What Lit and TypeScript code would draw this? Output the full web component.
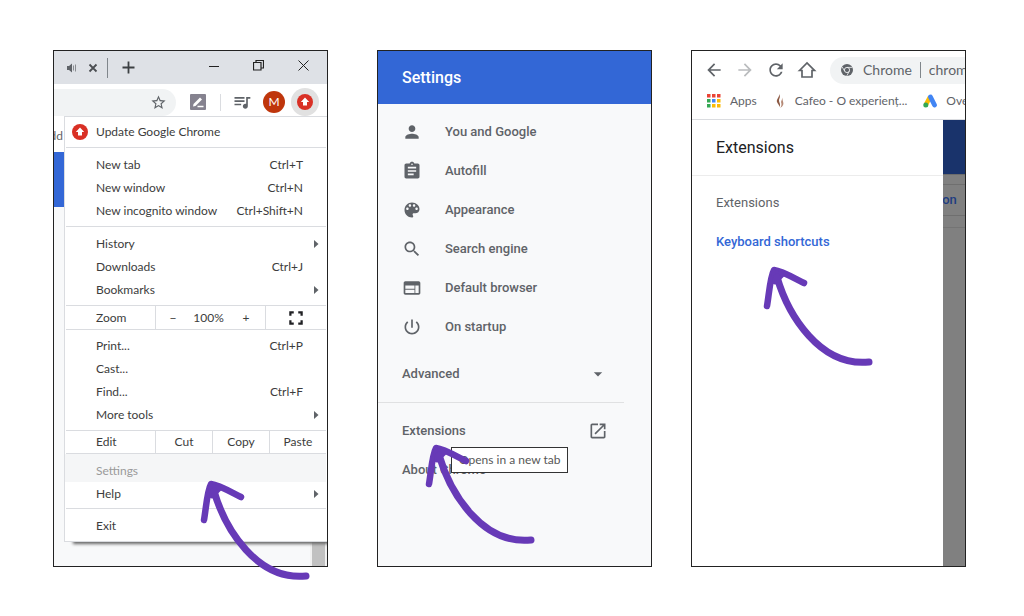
import { LitElement, html, css, svg } from "lit";
import { customElement } from "lit/decorators.js";

const ICONS: Record<string, string> = {
  person: "M12 12c2.21 0 4-1.79 4-4s-1.79-4-4-4-4 1.79-4 4 1.79 4 4 4zm0 2c-2.67 0-8 1.34-8 4v2h16v-2c0-2.66-5.33-4-8-4z",
  assignment: "M19 3h-4.18C14.4 1.84 13.3 1 12 1s-2.400.84-2.820 2H5c-1.100 0-2 .9-2 2v14c0 1.100.9 2 2 2h14c1.100 0 2-.9 2-2V5c0-1.100-.9-2-2-2zm-7 0c.55 0 1 .45 1 1s-.45 1-1 1-1-.45-1-1 .45-1 1-1zm2 14H7v-2h7v2zm3-4H7v-2h10v2zm0-4H7V7h10v2z",
  palette: "M12 3c-4.970 0-9 4.030-9 9s4.030 9 9 9c.83 0 1.500-.67 1.500-1.500 0-.39-.15-.74-.39-1.010-.23-.26-.38-.61-.38-.99 0-.83.67-1.500 1.500-1.500H16c2.760 0 5-2.240 5-5 0-4.420-4.030-8-9-8zm-5.500 9c-.83 0-1.500-.67-1.500-1.500S5.670 9 6.500 9 8 9.670 8 10.500 7.330 12 6.500 12zm3-4C8.670 8 8 7.330 8 6.500S8.670 5 9.500 5s1.500.67 1.500 1.500S10.330 8 9.500 8zm5 0c-.83 0-1.500-.67-1.500-1.500S13.670 5 14.500 5s1.500.67 1.500 1.500S15.330 8 14.500 8zm3 4c-.83 0-1.500-.67-1.500-1.500S16.670 9 17.500 9s1.500.67 1.500 1.500-.67 1.500-1.500 1.500z",
  search: "M15.500 14h-.79l-.28-.27C15.410 12.590 16 11.110 16 9.500 16 5.910 13.090 3 9.500 3S3 5.910 3 9.500 5.910 16 9.500 16c1.610 0 3.090-.59 4.230-1.570l.27.28v.79l5 4.990L20.490 19l-4.990-5zm-6 0C7.010 14 5 11.990 5 9.500S7.010 5 9.500 5 14 7.010 14 9.500 11.990 14 9.500 14z",
  web: "M20 4H4c-1.100 0-1.990.9-1.990 2L2 18c0 1.100.9 2 2 2h16c1.100 0 2-.9 2-2V6c0-1.100-.9-2-2-2zm-5 14H4v-4h11v4zm0-5H4V9h11v4zm5 5h-4V9h4v9z",
  power: "M13 3h-2v10h2V3zm4.830 2.170l-1.420 1.420C17.990 7.860 19 9.810 19 12c0 3.870-3.130 7-7 7s-7-3.130-7-7c0-2.190 1.010-4.140 2.580-5.420L6.170 5.170C4.230 6.820 3 9.260 3 12c0 4.970 4.030 9 9 9s9-4.030 9-9c0-2.740-1.230-5.180-3.170-6.830z",
  caret: "M7 10l5 5 5-5z",
  open: "M19 19H5V5h7V3H5c-1.110 0-2 .9-2 2v14c0 1.100.89 2 2 2h14c1.100 0 2-.9 2-2v-7h-2v7zM14 3v2h3.590l-9.830 9.830 1.410 1.410L19 6.410V10h2V3h-7z",
  star: "M22 9.240l-7.190-.62L12 2 9.190 8.630 2 9.240l5.460 4.730L5.820 21 12 17.270 18.180 21l-1.630-7.030L22 9.240zM12 15.400l-3.760 2.270 1-4.280-3.320-2.880 4.380-.38L12 6.100l1.710 4.040 4.380.38-3.320 2.880 1 4.280L12 15.400z",
  queue: "M15 6H3v2h12V6zm0 4H3v2h12v-2zM3 16h8v-2H3v2zM17 6v8.180c-.31-.11-.65-.18-1-.18-1.660 0-3 1.340-3 3s1.340 3 3 3 3-1.340 3-3V8h3V6h-5z",
  back: "M20 11H7.830l5.590-5.590L12 4l-8 8 8 8 1.410-1.410L7.830 13H20v-2z",
  forward: "M12 4l-1.410 1.410L16.170 11H4v2h12.170l-5.580 5.590L12 20l8-8z",
  reload: "M17.650 6.350C16.200 4.900 14.210 4 12 4c-4.420 0-7.990 3.580-7.990 8s3.570 8 7.990 8c3.730 0 6.840-2.550 7.730-6h-2.080c-.82 2.330-3.040 4-5.650 4-3.310 0-6-2.690-6-6s2.690-6 6-6c1.660 0 3.140.69 4.220 1.780L13 11h7V4l-2.350 2.350z",
  fullscreen: "M3 3h6v3H6v3H3zM15 3h6v6h-3V6h-3zM3 15h3v3h3v3H3zM18 15h3v6h-6v-3h3z",
  submenu: "M8 4l9 8-9 8z",
};

const icon = (name: string, size = 20) => html`<svg
  class="icon" width=${size} height=${size} viewBox="0 0 24 24" aria-hidden="true">${svg`<path d=${ICONS[name]} fill="currentColor"></path>`}</svg>`;

const updateBadge = () => html`<svg class="icon" width="16" height="16" viewBox="0 0 16 16" aria-hidden="true">
  <circle cx="8" cy="8" r="8" fill="#d93025"></circle>
  <path d="M8 3.600L12.200 8H10v3.600H6V8H3.800z" fill="#fff"></path>
</svg>`;

const base = css`
  * { box-sizing: border-box; }
  button, input { font: inherit; color: inherit; border: 0; padding: 0; margin: 0; background: none; border-radius: 0; outline: 0; min-width: 0; }
  a { color: inherit; text-decoration: none; }
  .icon { display: block; flex: none; }
`;

@customElement("pointer-arrow")
class PointerArrow extends LitElement {
  static styles = css`
    :host { display: block; pointer-events: none; }
    .arrow { display: block; fill: none; stroke: #673ab7; stroke-linecap: round; stroke-linejoin: round; }
  `;
  render() {
    return html`<svg class="arrow" width="120" height="112" viewBox="-14 -8 120 112" aria-hidden="true">
      <path d="M-7 35C-5 24-4 6 0 -1C8 0 18 6 30 12" stroke-width="6.500"></path>
      <path d="M0 1L1 11L8 4z" fill="#673ab7" stroke-width="5"></path>
      <path d="M3 6C14 44 46 96 95 91" stroke-width="7"></path>
    </svg>`;
  }
}

@customElement("browser-menu")
class BrowserMenu extends LitElement {
  static styles = [base, css`
    :host { display: block; font: 12px/16px "Segoe UI", Lato, sans-serif; color: #3c3c3c; background: #fff; border: 1px solid #dadce0; border-right: 0; box-shadow: 8px 3px 3px -1px #666; padding-right: 1px; }
    .group { padding: 5px 0 4px; }
    .tight { padding-top: 4px; }
    .group, .cells, .update { border-bottom: 1px solid #dadce0; margin-left: 1px; }
    .group.last, .group.selected { border-bottom: 0; }
    .group.after { padding: 0 0 3px; }
    .group.selected { background: #f5f6f7; padding: 5px 0 0; color: #9a9a9a; margin-left: 0; padding-left: 1px; }
    .item { display: flex; align-items: center; width: 100%; height: 23px; padding: 0 23px 0 30px; text-align: left; white-space: nowrap; }
    .key { margin-left: auto; }
    .item.sub { padding-right: 4px; }
    .sub .icon { margin-left: auto; color: #5f6368; }
    .update { display: flex; align-items: center; width: calc(100% - 1px); height: 31px; padding-left: 6px; gap: 8px; }
    .cells { display: grid; height: 24px; align-items: stretch; }
    .zoom { grid-template-columns: 89px 35px 1fr 38px 61px; }
    .edit { grid-template-columns: 89px 57px 57px 1fr; height: 23px; }
    .cell { display: flex; align-items: center; justify-content: center; }
    .cell.name { justify-content: flex-start; padding-left: 30px; }
    .line { border-left: 1px solid #dadce0; }
    .dark { color: #202124; }
  `];

  private item(label: string, key = "") {
    return html`<button class="item" role="menuitem"><span>${label}</span><span class="key">${key}</span></button>`;
  }
  private sub(label: string) {
    return html`<button class="item sub" role="menuitem" aria-haspopup="true"><span>${label}</span>${icon("submenu", 12)}</button>`;
  }
  render() {
    return html`
      <button class="update" role="menuitem">${updateBadge()}<span>Update Google Chrome</span></button>
      <div class="group">
        ${this.item("New tab", "Ctrl+T")}${this.item("New window", "Ctrl+N")}${this.item("New incognito window", "Ctrl+Shift+N")}
      </div>
      <div class="group">${this.sub("History")}${this.item("Downloads", "Ctrl+J")}${this.sub("Bookmarks")}</div>
      <div class="cells zoom">
        <span class="cell name">Zoom</span>
        <button class="cell line">−</button>
        <span class="cell">100%</span>
        <button class="cell">+</button>
        <button class="cell line dark" aria-label="Full screen">${icon("fullscreen", 18)}</button>
      </div>
      <div class="group tight">
        ${this.item("Print...", "Ctrl+P")}${this.item("Cast...")}${this.item("Find...", "Ctrl+F")}${this.sub("More tools")}
      </div>
      <div class="cells edit">
        <span class="cell name">Edit</span>
        <button class="cell line">Cut</button>
        <button class="cell line">Copy</button>
        <button class="cell line">Paste</button>
      </div>
      <div class="group selected">${this.item("Settings")}</div>
      <div class="group after">${this.sub("Help")}</div>
      <div class="group last">${this.item("Exit")}</div>
    `;
  }
}

@customElement("chrome-window")
class ChromeWindow extends LitElement {
  static styles = [base, css`
    :host { display: flex; flex-direction: column; position: relative; overflow: hidden; background: #f8f9fa; color: #5f6368; font: 12px/16px "Segoe UI", Lato, sans-serif; }
    .tabs { display: flex; align-items: center; height: 33px; flex: none; background: #dee1e6; padding: 0 1px 0 7px; }
    .btn { display: flex; align-items: center; justify-content: center; height: 33px; flex: none; }
    .small { width: 21px; }
    .tabline { width: 1px; height: 20px; background: #80868b; margin: 0 10px 0 4px; }
    .win { width: 45px; height: 29px; color: #222; align-self: flex-start; }
    .first { margin-left: auto; }
    .toolbar { display: flex; align-items: center; height: 36px; flex: none; background: #fff; }
    .omni { display: flex; align-items: center; flex: 1; height: 27px; background: #f1f3f4; border-radius: 0 14px 14px 0; padding-right: 9px; }
    .url { flex: 1; width: 20px; }
    .pen { margin-left: 14px; }
    .toolline { width: 1px; height: 17px; background: #dadce0; margin: 0 11px 0 14px; }
    .avatar { width: 22px; height: 22px; border-radius: 50%; background: #bf360c; color: #fff; margin: 0 6px 0 11px; }
    .update { width: 28px; height: 28px; border-radius: 50%; background: #e1e1e1; margin-right: 8px; }
    .strip { background: #fff; height: 32px; flex: none; }
    .bookmarks { display: flex; align-items: center; justify-content: flex-end; width: 9px; height: 32px; overflow: hidden; }
    .banner { height: 55px; flex: none; background: #3367d6; }
    .page { flex: 1; display: flex; justify-content: flex-end; }
    .scroll { width: 17px; background: #f1f1f1; padding: 0 2px; }
    .thumb { background: #c1c1c1; height: 100%; }
    .menu { position: absolute; left: 10px; right: 0; top: 65px; }
  `];
  render() {
    return html`
      <div class="tabs">
        <button class="btn small" aria-label="Mute tab"><svg class="icon" width="12" height="12" viewBox="0 0 12 12"><path d="M1 4h2L6 1.500v9L3 8H1z" fill="#5f6368"></path><path d="M7.500 3.500v5M9.500 2.500v7" stroke="#8a8d91" fill="none"></path></svg></button>
        <button class="btn small" aria-label="Close tab"><svg class="icon" width="10" height="10" viewBox="0 0 10 10"><path d="M1.500 1.500l7 7M8.500 1.500l-7 7" stroke="#4b4e52" stroke-width="1.800"></path></svg></button>
        <span class="tabline"></span>
        <button class="btn small" aria-label="New tab"><svg class="icon" width="13" height="13" viewBox="0 0 13 13"><path d="M6.500 .5v12M.5 6.500h12" stroke="#3c4043" stroke-width="1.800"></path></svg></button>
        <button class="btn win first" aria-label="Minimize"><svg class="icon" width="10" height="10" viewBox="0 0 10 10"><path d="M0 5.500h10" stroke="currentColor"></path></svg></button>
        <button class="btn win" aria-label="Restore"><svg class="icon" width="11" height="11" viewBox="0 0 11 11"><path d="M.5 2.500h7.500v7.500H.5zM3 2.500V.5h7.500V8H8" stroke="currentColor" stroke-width="1.200" fill="none"></path></svg></button>
        <button class="btn win" aria-label="Close"><svg class="icon" width="11" height="11" viewBox="0 0 11 11"><path d="M.5 .5l10 10M10.500 .5l-10 10" stroke="currentColor"></path></svg></button>
      </div>
      <div class="toolbar">
        <div class="omni">
          <input class="url" type="text" aria-label="Address">
          <button class="btn" aria-label="Bookmark this tab">${icon("star", 17)}</button>
        </div>
        <button class="btn pen" aria-label="Notes"><svg class="icon" width="16" height="16" viewBox="0 0 16 16"><rect width="16" height="16" rx="1" fill="#85828f"></rect><path d="M3 12.500L3.500 10L10 3.500l2 2L5.500 12z" fill="#fff"></path><path d="M7.500 12.500h6" stroke="#fff" stroke-width="1.500"></path></svg></button>
        <span class="toolline"></span>
        <button class="btn" aria-label="Media control">${icon("queue", 20)}</button>
        <button class="btn avatar" aria-label="Profile">M</button>
        <button class="btn update" aria-label="Update">${updateBadge()}</button>
      </div>
      <div class="strip"><div class="bookmarks">dd</div></div>
      <div class="banner"></div>
      <div class="page"><div class="scroll"><div class="thumb"></div></div></div>
      <browser-menu class="menu" role="menu"></browser-menu>
    `;
  }
}

@customElement("settings-nav")
class SettingsNav extends LitElement {
  static styles = [base, css`
    :host { display: block; overflow: hidden; position: relative; background: #f8f9fa; color: #5f6368; font: 500 13px/16px Roboto, sans-serif; }
    .head { display: flex; align-items: center; height: 53px; padding-left: 24px; margin: 0; background: #3367d6; color: #fff; font-size: 16px; font-weight: 500; }
    .list { padding-top: 8px; }
    .row { display: flex; align-items: center; height: 39px; padding-left: 24px; gap: 23px; }
    .advanced { width: calc(100% - 27px); height: 56px; justify-content: space-between; padding-right: 16px; }
    .split { border-top: 1px solid #e0e1e2; width: calc(100% - 27px); padding-top: 8px; }
    .out { justify-content: space-between; padding-right: 16px; }
    .tip { position: absolute; left: 73px; top: 396px; border: 1px solid #333; background: #fff; color: #575757; padding: 4px 7px; font: 12px/16px "Segoe UI", Lato, sans-serif; white-space: nowrap; }
  `];
  render() {
    const rows = [
      ["person", "You and Google"], ["assignment", "Autofill"], ["palette", "Appearance"],
      ["search", "Search engine"], ["web", "Default browser"], ["power", "On startup"],
    ];
    return html`
      <h1 class="head">Settings</h1>
      <nav class="list">
        ${rows.map(([name, label]) => html`<a class="row" href="#">${icon(name)}<span>${label}</span></a>`)}
        <button class="row advanced"><span>Advanced</span>${icon("caret")}</button>
        <div class="split">
          <a class="row out" href="#"><span>Extensions</span>${icon("open")}</a>
          <a class="row" href="#">About Chrome</a>
        </div>
      </nav>
      <div class="tip" role="tooltip">Opens in a new tab</div>
    `;
  }
}

@customElement("extensions-window")
class ExtensionsWindow extends LitElement {
  static styles = [base, css`
    :host { display: flex; flex-direction: column; overflow: hidden; background: #fff; color: #5f6368; font: 12px/16px "Segoe UI", Lato, sans-serif; }
    .bar { display: flex; align-items: center; height: 38px; flex: none; padding-left: 12px; gap: 11px; }
    .nav { flex: none; }
    .off { color: #babcbe; }
    .omni { display: flex; align-items: center; flex: 1; height: 27px; min-width: 0; background: #f1f3f4; border-radius: 14px 0 0 14px; padding-left: 11px; margin-left: 2px; font-size: 14px; }
    .site { margin-left: 10px; }
    .bar-line { width: 1px; height: 16px; background: #80868b; margin: 0 8px; flex: none; }
    .url { flex: 1; width: 30px; }
    .marks { display: flex; align-items: center; height: 31px; flex: none; padding: 0 0 6px 15px; border-bottom: 1px solid #dadce0; white-space: nowrap; overflow: hidden; }
    .mark { display: flex; align-items: center; flex: none; gap: 9px; }
    .flame { margin-left: 17px; }
    .ads { margin-left: 16px; gap: 8px; }
    .body { display: flex; flex: 1; min-height: 0; }
    .drawer { flex: 1; font: 13px/16px Roboto, sans-serif; }
    .title { display: flex; align-items: center; height: 56px; margin: 0; padding-left: 24px; border-bottom: 1px solid #ececec; color: #202124; font-size: 16px; font-weight: 400; }
    .links { padding-top: 7px; }
    .link { display: flex; align-items: center; height: 39px; padding-left: 24px; }
    .current { color: #3367d6; font-weight: 500; }
    .behind { width: 22px; flex: none; background: #808080; overflow: hidden; font: 500 13px/16px Roboto, sans-serif; color: #1f3d80; }
    .banner { height: 55px; background: #19336b; border-bottom: 1px solid #6c6c6c; }
    .gap { height: 9px; }
    .load { display: flex; align-items: center; justify-content: center; padding-right: 9px; height: 32px; border: solid #6f6f6f; border-width: 1px 0; }
    .rule { height: 12px; border-bottom: 1px solid #747474; }
  `];
  render() {
    const colors = ["#ea4335", "#ea4335", "#ea4335", "#34a853", "#4285f4", "#fbbc05", "#34a853", "#fbbc05", "#fbbc05"];
    return html`
      <div class="bar">
        <button class="nav" aria-label="Back">${icon("back")}</button>
        <button class="nav off" aria-label="Forward">${icon("forward")}</button>
        <button class="nav" aria-label="Reload">${icon("reload")}</button>
        <button class="nav" aria-label="Home"><svg class="icon" width="20" height="20" viewBox="0 0 20 20"><path d="M2.500 10.500L10 3l7.500 7.500H15V17H5v-6.500z" fill="none" stroke="currentColor" stroke-width="1.700"></path></svg></button>
        <div class="omni">
          <svg class="icon" width="12" height="12" viewBox="0 0 12 12" aria-hidden="true"><circle cx="6" cy="6" r="6" fill="#5f6368"></circle><circle cx="6" cy="6" r="2.600" fill="#5f6368" stroke="#f1f3f4" stroke-width=".9"></circle><path d="M6 3.400h5.300M3.700 7.200L1.200 3M8.300 7.300L5.800 11.800" stroke="#f1f3f4" stroke-width=".8"></path></svg>
          <span class="site">Chrome</span><span class="bar-line"></span>
          <input class="url" type="text" aria-label="Address" value="chrome://extensions">
        </div>
      </div>
      <div class="marks">
        <a class="mark" href="#"><svg class="icon" width="14" height="14" viewBox="0 0 14 14" aria-hidden="true">
          ${colors.map((c, i) => svg`<rect x=${(i % 3) * 5} y=${Math.floor(i / 3) * 5} width="3.500" height="3.500" fill=${c}></rect>`)}
        </svg><span>Apps</span></a>
        <a class="mark flame" href="#"><svg class="icon" width="12" height="16" viewBox="0 0 12 16" aria-hidden="true"><path d="M5 1C6 4 2 6 3 9c.6 2 2.500 3 2.500 5C7 11 5 9.500 5 7.500S7 4 5 1z" fill="#8d5a44"></path><path d="M8 4.500C8.600 7 6.500 8 7.300 10c.4 1.500.2 3-1 5 3-2 3.700-4 2.700-6.500C8.500 7 8.700 6 8 4.500z" fill="#b58975"></path></svg><span>Cafeo - O experienț...</span></a>
        <a class="mark ads" href="#"><svg class="icon" width="15" height="14" viewBox="0 0 15 14" aria-hidden="true"><path d="M7 3L3 10.500" stroke="#fbbc04" stroke-width="4.600"></path><path d="M7.500 3l4 8" stroke="#4285f4" stroke-width="4.800" stroke-linecap="round"></path><circle cx="2.800" cy="11" r="2.500" fill="#34a853"></circle></svg><span>Overview</span></a>
      </div>
      <div class="body">
        <div class="drawer">
          <h1 class="title">Extensions</h1>
          <nav class="links">
            <a class="link" href="#">Extensions</a>
            <a class="link current" href="#">Keyboard shortcuts</a>
          </nav>
        </div>
        <div class="behind">
          <div class="banner"></div>
          <div class="gap"></div>
          <div class="load">on</div>
          <div class="rule"></div>
        </div>
      </div>
    `;
  }
}

@customElement("app-root")
class AppRoot extends LitElement {
  static styles = css`
    :host { display: block; background: #fff; }
    .page { display: flex; box-sizing: border-box; min-height: 100vh; padding: 50px 58px 49px 53px; }
    .shot { display: flex; flex: 1; min-width: 0; position: relative; border: 1px solid #222; }
    .nav { margin-left: 49px; }
    .ext { margin-left: 39px; }
    .view { flex: 1; min-width: 0; }
    .arrow { position: absolute; }
    .to-settings { left: 143px; top: 426px; }
    .to-extensions { left: 44px; top: 390px; }
    .to-shortcuts { left: 68px; top: 212px; }
  `;
  render() {
    return html`
      <main class="page">
        <section class="shot"><chrome-window class="view"></chrome-window><pointer-arrow class="arrow to-settings"></pointer-arrow></section>
        <section class="shot nav"><settings-nav class="view"></settings-nav><pointer-arrow class="arrow to-extensions"></pointer-arrow></section>
        <section class="shot ext"><extensions-window class="view"></extensions-window><pointer-arrow class="arrow to-shortcuts"></pointer-arrow></section>
      </main>
    `;
  }
}
